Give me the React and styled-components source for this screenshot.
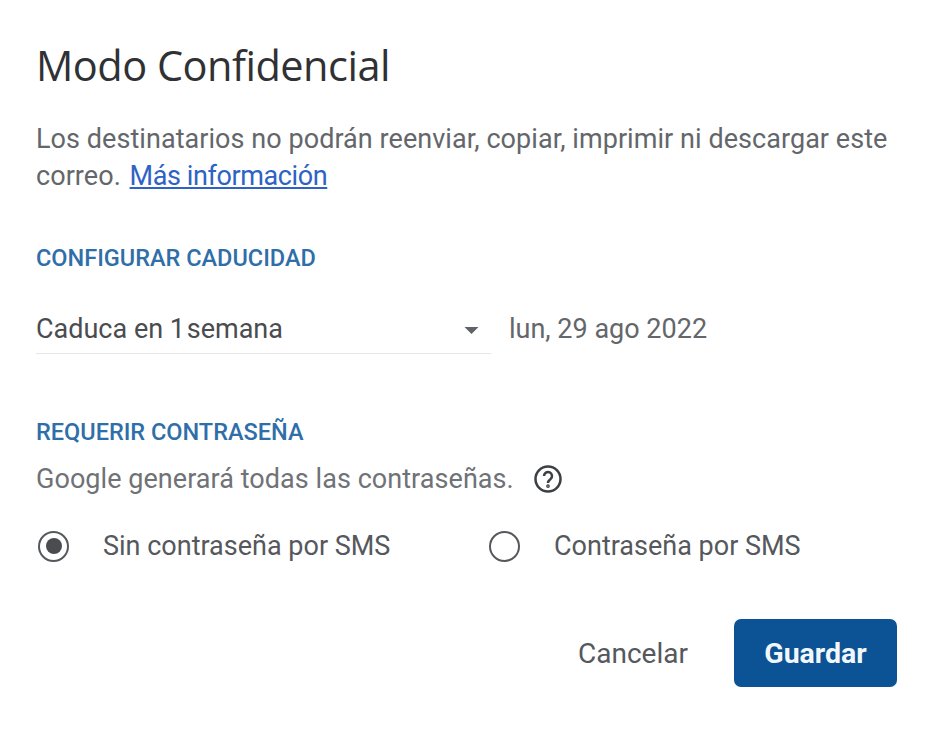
import React from "react";
import styled, { createGlobalStyle } from "styled-components";

const GlobalStyle = createGlobalStyle`
  html, body {
    margin: 0;
    padding: 0;
    background: #fff;
  }
`;

const Dialog = styled.div`
  width: 940px;
  height: 729px;
  box-sizing: border-box;
  padding: 38px 43px 0 36px;
  font-family: Roboto, "Liberation Sans", sans-serif;
  color: #5f6368;
  display: flex;
  flex-direction: column;
`;

const Title = styled.h1`
  margin: 0;
  font-size: 41.5px;
  line-height: 54px;
  font-weight: 400;
  font-family: "Open Sans", Roboto, sans-serif;
  letter-spacing: -0.5px;
  color: #303134;
`;

const Description = styled.p`
  margin: 29px 0 0;
  font-size: 27px;
  line-height: 37px;
  letter-spacing: 0.055px;
  color: #63666a;
`;

const Link = styled.a`
  margin-left: 2px;
  letter-spacing: -0.4px;
  color: #2f62c4;
  text-decoration: underline;
`;

const SectionLabel = styled.div`
  margin-top: ${(p) => p.$top}px;
  font-size: 23.5px;
  line-height: 28px;
  font-weight: 500;
  color: #2f6ea8;
`;

const ExpiryRow = styled.div`
  margin-top: 41px;
  display: flex;
  align-items: flex-start;
`;

const Select = styled.div`
  width: 455px;
  height: 41px;
  box-sizing: border-box;
  border-bottom: 1px solid #e6e6e6;
  display: flex;
  align-items: flex-start;
  justify-content: space-between;
  padding-right: 12px;
  font-size: 27px;
  line-height: 32px;
  color: #4a4c50;
`;

const TightSpace = styled.span`
  word-spacing: -5px;
`;

const Arrow = styled.svg`
  width: 15px;
  height: 7px;
  margin-top: 14px;
  fill: #5f6368;
`;

const ExpiryDate = styled.span`
  margin-left: 18px;
  font-size: 27px;
  line-height: 32px;
  color: #63666a;
`;

const HintRow = styled.div`
  margin-top: 16px;
  display: flex;
  align-items: center;
  gap: 19px;
  font-size: 27px;
  line-height: 34px;
  letter-spacing: 0.05px;
  color: #6f7276;
`;

const HelpIcon = styled.svg`
  width: 30px;
  height: 30px;
  fill: none;
  stroke: #3c4043;
  stroke-width: 2;
`;

const RadioRow = styled.div`
  margin-top: 33px;
  display: flex;
  align-items: center;
`;

const RadioOption = styled.label`
  width: ${(p) => p.$width}px;
  display: flex;
  align-items: center;
  gap: 34px;
  font-size: 27px;
  line-height: 34px;
  color: #55585c;
`;

const RadioCircle = styled.span`
  width: 31px;
  height: 31px;
  box-sizing: border-box;
  margin-left: 2px;
  border: 2.5px solid #55585c;
  border-radius: 50%;
  flex: none;
  display: flex;
  align-items: center;
  justify-content: center;

  &::after {
    content: "";
    width: 16px;
    height: 16px;
    border-radius: 50%;
    background: ${(p) => (p.$checked ? "#4a4c50" : "transparent")};
  }
`;

const Actions = styled.div`
  margin-top: 56px;
  display: flex;
  justify-content: flex-end;
  align-items: center;
  gap: 46px;
`;

const TextButton = styled.button`
  border: none;
  background: none;
  padding: 0;
  font: inherit;
  font-size: 28px;
  font-weight: 400;
  color: #55585c;
`;

const PrimaryButton = styled.button`
  width: 163px;
  height: 68px;
  border: none;
  border-radius: 7px;
  background: #0b5394;
  color: #f2f7fb;
  font: inherit;
  font-size: 28.5px;
  font-weight: 700;
`;

export default function App() {
  return (
    <>
      <GlobalStyle />
      <Dialog>
        <Title>Modo Confidencial</Title>
        <Description>
          Los destinatarios no podrán reenviar, copiar, imprimir ni descargar este correo.{" "}
          <Link href="#">Más información</Link>
        </Description>
        <SectionLabel $top={49}>CONFIGURAR CADUCIDAD</SectionLabel>
        <ExpiryRow>
          <Select>
            <span>
              Caduca en <TightSpace>1 semana</TightSpace>
            </span>
            <Arrow viewBox="0 0 16 8">
              <path d="M0 0h16L8 8z" />
            </Arrow>
          </Select>
          <ExpiryDate>lun, 29 ago 2022</ExpiryDate>
        </ExpiryRow>
        <SectionLabel $top={64}>REQUERIR CONTRASEÑA</SectionLabel>
        <HintRow>
          <span>Google generará todas las contraseñas.</span>
          <HelpIcon viewBox="0 0 24 24">
            <circle cx="12" cy="12" r="10" />
            <path d="M8.8 9.6a3.2 3.2 0 1 1 5.2 2.5c-1.2 1-2 1.5-2 3" />
            <circle cx="12" cy="17.6" r="0.5" fill="#3c4043" />
          </HelpIcon>
        </HintRow>
        <RadioRow>
          <RadioOption $width={451}>
            <RadioCircle $checked />
            Sin contraseña por SMS
          </RadioOption>
          <RadioOption $width={340}>
            <RadioCircle />
            Contraseña por SMS
          </RadioOption>
        </RadioRow>
        <Actions>
          <TextButton>Cancelar</TextButton>
          <PrimaryButton>Guardar</PrimaryButton>
        </Actions>
      </Dialog>
    </>
  );
}
